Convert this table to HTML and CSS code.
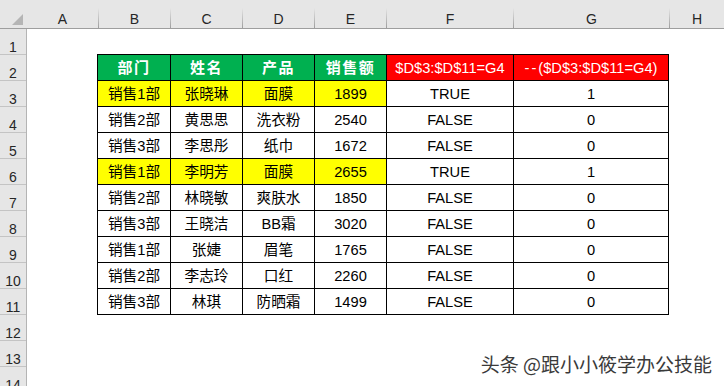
FILE: index.html
```html
<!DOCTYPE html>
<html lang="zh">
<head>
<meta charset="utf-8">
<title>Sheet</title>
<link rel="stylesheet" href="styles.css">
</head>
<body>
<div class="sheet">
  <div class="colbar">
    <div class="corner"><span class="tri"></span></div>
    <div class="col c72">A</div>
    <div class="col c72">B</div>
    <div class="col c72">C</div>
    <div class="col c72">D</div>
    <div class="col c72">E</div>
    <div class="col c127">F</div>
    <div class="col c156">G</div>
    <div class="col last">H</div>
  </div>
  <div class="main">
    <div class="rowbar">
      <div class="rn">1</div><div class="rn">2</div><div class="rn">3</div><div class="rn">4</div>
      <div class="rn">5</div><div class="rn">6</div><div class="rn">7</div><div class="rn">8</div>
      <div class="rn">9</div><div class="rn">10</div><div class="rn">11</div><div class="rn">12</div>
      <div class="rn">13</div><div class="rn">14</div>
    </div>
    <div class="canvas">
      <div class="tbl">
        <div class="c hd g">部门</div><div class="c hd g">姓名</div><div class="c hd g">产品</div><div class="c hd g">销售额</div>
        <div class="c hd r f">$D$3:$D$11=G4</div><div class="c hd r f"><span class="dash">--</span>($D$3:$D$11=G4)</div>

        <div class="c y">销售1部</div><div class="c y">张晓琳</div><div class="c y">面膜</div><div class="c y">1899</div><div class="c">TRUE</div><div class="c">1</div>
        <div class="c">销售2部</div><div class="c">黄思思</div><div class="c">洗衣粉</div><div class="c">2540</div><div class="c">FALSE</div><div class="c">0</div>
        <div class="c">销售3部</div><div class="c">李思彤</div><div class="c">纸巾</div><div class="c">1672</div><div class="c">FALSE</div><div class="c">0</div>
        <div class="c y">销售1部</div><div class="c y">李明芳</div><div class="c y">面膜</div><div class="c y">2655</div><div class="c">TRUE</div><div class="c">1</div>
        <div class="c">销售2部</div><div class="c">林晓敏</div><div class="c">爽肤水</div><div class="c">1850</div><div class="c">FALSE</div><div class="c">0</div>
        <div class="c">销售3部</div><div class="c">王晓洁</div><div class="c">BB霜</div><div class="c">3020</div><div class="c">FALSE</div><div class="c">0</div>
        <div class="c">销售1部</div><div class="c">张婕</div><div class="c">眉笔</div><div class="c">1765</div><div class="c">FALSE</div><div class="c">0</div>
        <div class="c">销售2部</div><div class="c">李志玲</div><div class="c">口红</div><div class="c">2260</div><div class="c">FALSE</div><div class="c">0</div>
        <div class="c">销售3部</div><div class="c">林琪</div><div class="c">防晒霜</div><div class="c">1499</div><div class="c">FALSE</div><div class="c">0</div>
      </div>
    </div>
  </div>
  <div class="wm">头条 @跟小小筱学办公技能</div>
</div>
</body>
</html>
```
FILE: styles.css
```css
* { box-sizing: border-box; }
html, body { margin: 0; padding: 0; }
body {
  width: 724px;
  height: 386px;
  overflow: hidden;
  background: #fff;
  font-family: "Liberation Sans", "Noto Sans CJK SC", sans-serif;
}
.sheet {
  position: relative;
  width: 724px;
  height: 386px;
  overflow: hidden;
  display: flex;
  flex-direction: column;
}
.colbar {
  display: flex;
  height: 29px;
  flex: none;
  background: #e6e6e6;
  border-bottom: 1px solid #9e9e9e;
}
.corner {
  width: 27px;
  flex: none;
  display: flex;
  align-items: flex-end;
  justify-content: flex-end;
  padding: 0 4px 3px 0;
}
.tri {
  width: 11px;
  height: 11px;
  background: #b5b5b5;
  clip-path: polygon(100% 0, 100% 100%, 0 100%);
}
.col {
  flex: none;
  text-align: center;
  font-size: 14px;
  line-height: 16px;
  padding-top: 11px;
  color: #262626;
  border-right: 1px solid #a8a8a8;
  border-image: linear-gradient(to bottom, rgba(168,168,168,0) 30%, #9a9a9a 100%) 1;
}
.c72 { width: 72px; }
.c127 { width: 127px; }
.c156 { width: 156px; }
.col.last { flex: 1; border-right: none; border-image: none; }
.main {
  display: flex;
  flex: 1;
}
.rowbar {
  width: 27px;
  flex: none;
  background: #e6e6e6;
  border-right: 1px solid #b4b4b4;
}
.rn {
  height: 26px;
  border-bottom: 1px solid #c4c4c4;
  text-align: center;
  font-size: 14px;
  line-height: 16px;
  padding-top: 10px;
  color: #262626;
}
.canvas {
  flex: 1;
  padding: 25px 0 0 70px;
}
.tbl {
  display: grid;
  grid-template-columns: 72px 71px 71px 71px 126px 154px;
  grid-auto-rows: 25px;
  gap: 1px;
  width: max-content;
  background: #000;
  border: 1px solid #000;
}
.c {
  background: #fff;
  color: #000;
  text-align: center;
  font-size: 14.67px;
  line-height: 17px;
  padding-top: 5px;
  white-space: nowrap;
}
.c.y { background: #ffff00; }
.c.hd {
  color: #fff;
  font-weight: bold;
  font-size: 15px;
  letter-spacing: 1.5px;
  padding-top: 4px;
}
.c.hd.f {
  font-weight: normal;
  font-size: 14.67px;
  letter-spacing: 0;
  padding-top: 5px;
}
.dash { letter-spacing: 2px; }
.c.g { background: #00b050; }
.c.r { background: #ff0000; }
.wm {
  position: absolute;
  right: 12px;
  top: 354px;
  font-family: "Noto Sans CJK SC", sans-serif;
  font-size: 19px;
  line-height: 20px;
  color: #3a3a3a;
  white-space: nowrap;
  text-shadow: 0 0 1px #fff, 1px 1px 0 rgba(255,255,255,0.8);
}
```
